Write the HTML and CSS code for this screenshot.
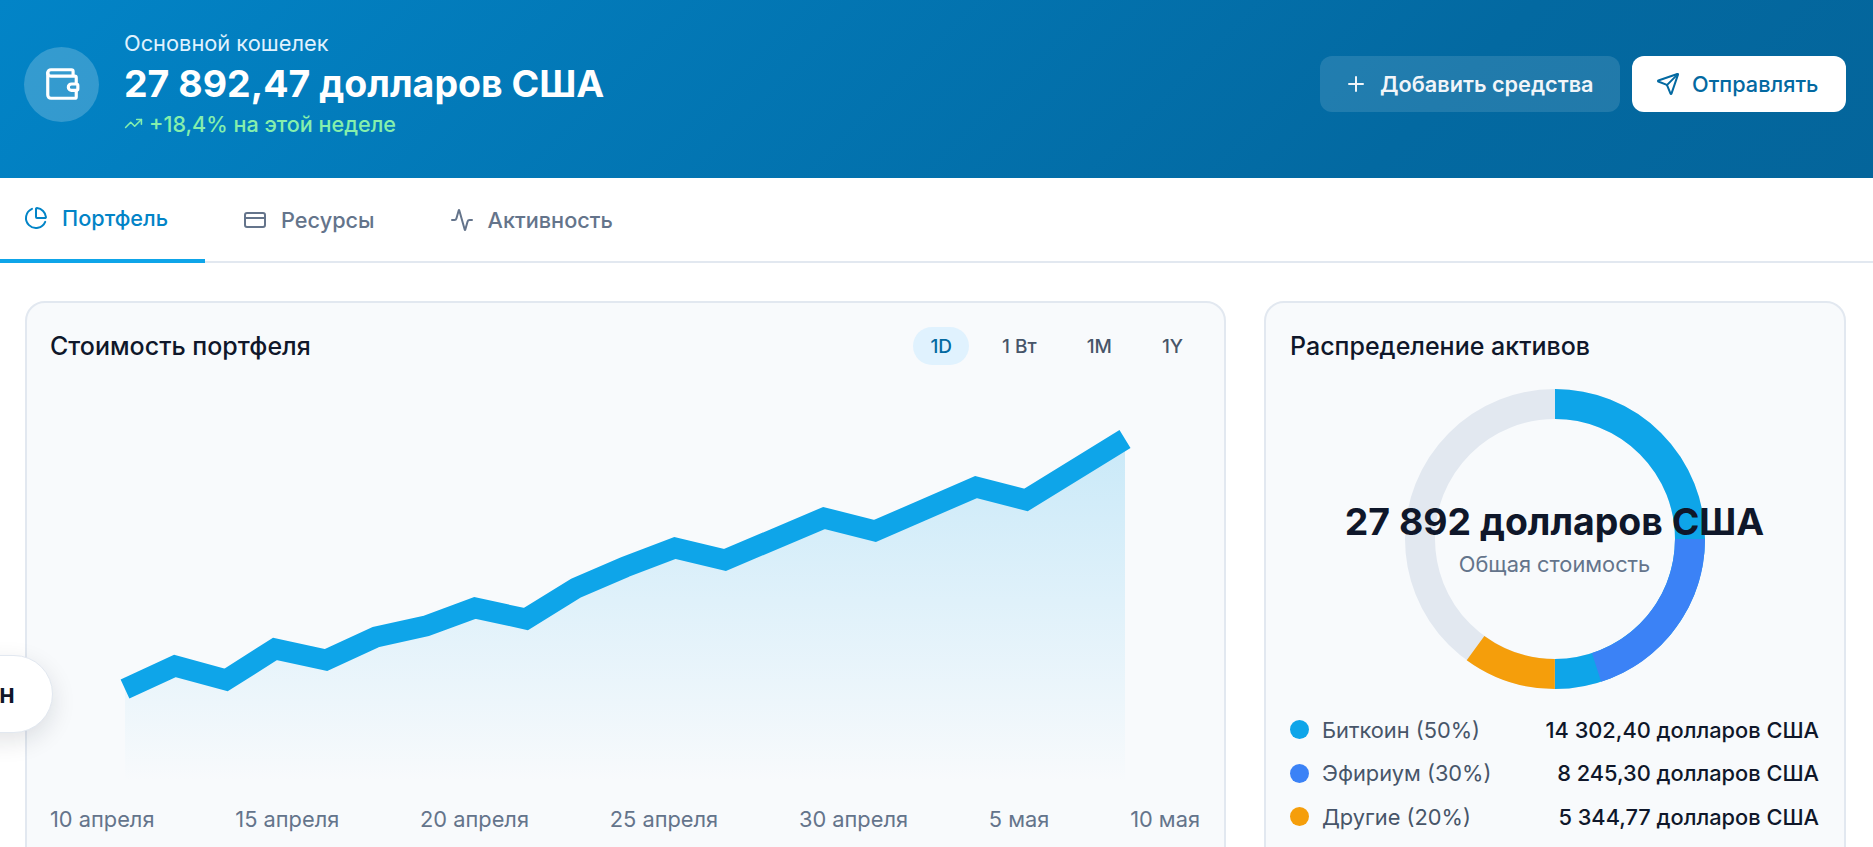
FILE: index.html
```html
<!DOCTYPE html>
<html lang="ru">

<head>
  <meta charset="UTF-8">
  <title>Основной кошелек</title>
  <link rel="stylesheet" href="styles.css">
</head>

<body>
  <header class="wallet-head">
    <div class="wallet-info">
      <div class="wallet-badge">
        <svg class="icon" width="38" height="38" viewBox="0 0 24 24">
          <path d="M19 7V4a1 1 0 0 0-1-1H5a2 2 0 0 0 0 4h15a1 1 0 0 1 1 1v4h-3a2 2 0 0 0 0 4h3a1 1 0 0 0 1-1v-2a1 1 0 0 0-1-1" />
          <path d="M3 5v14a2 2 0 0 0 2 2h15a1 1 0 0 0 1-1v-4" />
        </svg>
      </div>
      <div class="wallet-text">
        <div class="wallet-label">Основной кошелек</div>
        <div class="wallet-total">27 892,47 долларов США</div>
        <div class="wallet-trend">
          <svg class="icon" width="19" height="19" viewBox="0 0 24 24">
            <path d="M22 7 13.5 15.5 8.5 10.5 2 17" />
            <path d="M16 7h6v6" />
          </svg>
          <span>+18,4% на этой неделе</span>
        </div>
      </div>
    </div>
    <div class="wallet-actions">
      <button class="btn btn-add">
        <svg class="icon" width="24" height="24" viewBox="0 0 24 24">
          <path d="M5 12h14" />
          <path d="M12 5v14" />
        </svg>
        Добавить средства
      </button>
      <button class="btn btn-send">
        <svg class="icon" width="24" height="24" viewBox="0 0 24 24">
          <path d="M14.536 21.686a.5.5 0 0 0 .937-.024l6.5-19a.496.496 0 0 0-.635-.635l-19 6.5a.5.5 0 0 0-.024.937l7.93 3.18a2 2 0 0 1 1.112 1.11z" />
          <path d="m21.854 2.147-10.94 10.939" />
        </svg>
        Отправлять
      </button>
    </div>
  </header>

  <nav class="tabs">
    <a class="tab active">
      <svg class="icon" width="24" height="24" viewBox="0 0 24 24">
        <path d="M21 12c.552 0 1.005-.449.95-.998a10 10 0 0 0-8.953-8.951c-.55-.055-.998.398-.998.95v8a1 1 0 0 0 1 1z" />
        <path d="M21.21 15.89A10 10 0 1 1 8 2.83" />
      </svg>
      Портфель
    </a>
    <a class="tab">
      <svg class="icon" width="24" height="24" viewBox="0 0 24 24">
        <rect x="2" y="5" width="20" height="14" rx="2" />
        <path d="M2 10h20" />
      </svg>
      Ресурсы
    </a>
    <a class="tab">
      <svg class="icon" width="24" height="24" viewBox="0 0 24 24">
        <path d="M22 12h-2.48a2 2 0 0 0-1.93 1.46l-2.35 8.36a.25.25 0 0 1-.48 0L9.24 2.18a.25.25 0 0 0-.48 0l-2.35 8.36A2 2 0 0 1 4.49 12H2" />
      </svg>
      Активность
    </a>
  </nav>

  <main class="content">
    <section class="card chart-card">
      <div class="card-top">
        <h2 class="card-title">Стоимость портфеля</h2>
        <div class="periods">
          <span class="period active">1D</span>
          <span class="period">1 Вт</span>
          <span class="period">1M</span>
          <span class="period">1Y</span>
        </div>
      </div>
      <svg class="chart" width="1149" height="413" viewBox="0 0 1149 413">
        <defs>
          <linearGradient id="areaFill" x1="0" y1="0" x2="0" y2="1">
            <stop offset="0" stop-color="#0ea5e9" stop-opacity="0.2" />
            <stop offset="1" stop-color="#0ea5e9" stop-opacity="0" />
          </linearGradient>
        </defs>
        <polygon fill="url(#areaFill)" points="75,296 125,273 176,287 225,256 276,267 326,244 376,233 425,215 476,226 526,195 575,174 625,155 675,167 774,125 825,138 926,94 976,107 1075,46 1075,390 75,390" />
        <polyline class="chart-line" points="75,296 125,273 176,287 225,256 276,267 326,244 376,233 425,215 476,226 526,195 575,174 625,155 675,167 774,125 825,138 926,94 976,107 1075,46" />
      </svg>
      <div class="axis">
        <span>10 апреля</span>
        <span>15 апреля</span>
        <span>20 апреля</span>
        <span>25 апреля</span>
        <span>30 апреля</span>
        <span>5 мая</span>
        <span>10 мая</span>
      </div>
    </section>

    <section class="card alloc-card">
      <h2 class="card-title">Распределение активов</h2>
      <div class="donut">
        <svg class="donut-svg" width="300" height="300" viewBox="0 0 300 300">
          <circle class="ring ring-base" cx="150" cy="150" r="135" />
          <circle class="ring ring-btc" cx="150" cy="150" r="135" stroke-dasharray="424.1 848.2" />
          <circle class="ring ring-eth" cx="150" cy="150" r="135" stroke-dasharray="169.6 848.2" stroke-dashoffset="-212.06" />
          <circle class="ring ring-other" cx="150" cy="150" r="135" stroke-dasharray="84.8 848.2" stroke-dashoffset="-424.1" />
        </svg>
        <div class="donut-center">
          <div class="donut-total">27 892 долларов США</div>
          <div class="donut-label">Общая стоимость</div>
        </div>
      </div>
      <ul class="legend">
        <li class="legend-row">
          <span class="dot dot-btc"></span>
          <span class="legend-name">Биткоин (50%)</span>
          <span class="legend-value">14 302,40 долларов США</span>
        </li>
        <li class="legend-row">
          <span class="dot dot-eth"></span>
          <span class="legend-name">Эфириум (30%)</span>
          <span class="legend-value">8 245,30 долларов США</span>
        </li>
        <li class="legend-row">
          <span class="dot dot-other"></span>
          <span class="legend-name">Другие (20%)</span>
          <span class="legend-value">5 344,77 долларов США</span>
        </li>
      </ul>
    </section>
  </main>

  <div class="float-pill"><span>н</span></div>
</body>

</html>
```

FILE: styles.css
```css
* {
  box-sizing: border-box;
}

html,
body {
  height: 847px;
  overflow: hidden;
}

body {
  margin: 0;
  background-color: #fff;
  color: #0f172a;
  font-family: Inter, "Noto Sans", sans-serif;
}

.icon {
  flex: none;
  fill: none;
  stroke: currentColor;
  stroke-width: 2;
  stroke-linecap: round;
  stroke-linejoin: round;
}

/* header */
.wallet-head {
  display: flex;
  justify-content: space-between;
  align-items: center;
  height: 178px;
  padding: 30px 27px 40px 24px;
  background: linear-gradient(135deg, #0284c7, #0369a1 75%, #04659b);
  color: #fff;
}

.wallet-info {
  display: flex;
  align-items: center;
  gap: 25px;
}

.wallet-badge {
  display: flex;
  align-items: center;
  justify-content: center;
  width: 75px;
  height: 75px;
  border-radius: 50%;
  background-color: rgba(255, 255, 255, 0.2);
}

.wallet-text {
  padding-bottom: 2px;
}

.wallet-label {
  font-size: 21.8px;
  line-height: 26px;
  color: #e0f2fe;
}

.wallet-total {
  margin-top: 4px;
  font-size: 37.5px;
  line-height: 48px;
  font-weight: 700;
}

.wallet-trend {
  display: flex;
  align-items: center;
  gap: 6px;
  margin-top: 3px;
  font-size: 21.6px;
  line-height: 26px;
  font-weight: 500;
  color: #86efac;
}

.wallet-actions {
  display: flex;
  gap: 12px;
}

.btn {
  display: flex;
  align-items: center;
  gap: 12px;
  height: 56px;
  padding: 0 24px;
  border: 0;
  border-radius: 12px;
  font-family: inherit;
  font-size: 21.7px;
  font-weight: 600;
  white-space: nowrap;
}

.btn-add {
  width: 300px;
  background-color: rgba(255, 255, 255, 0.12);
  color: #f1f5f9;
}

.btn-send {
  width: 214px;
  background-color: #fff;
  color: #0369a1;
  font-weight: 500;
}

/* tabs */
.tabs {
  display: flex;
  height: 85px;
  border-bottom: 2px solid #e2e8f0;
}

.tab {
  display: flex;
  align-items: center;
  gap: 14px;
  padding: 0 37px 0 38px;
  font-size: 21.7px;
  font-weight: 500;
  color: #64748b;
}

.tab.active {
  padding: 0 37px 2px 24px;
  margin-bottom: -2px;
  border-bottom: 4px solid #0ea5e9;
  color: #0284c7;
}

/* cards */
.content {
  display: grid;
  grid-template-columns: 1201px 582px;
  gap: 38px;
  padding: 38px 27px 0 25px;
}

.card {
  height: 640px;
  padding: 24px 25px 24px 24px;
  border: 2px solid #e2e8f0;
  border-radius: 20px;
  background-color: #f8fafc;
}

.chart-card {
  padding: 24px 24px 24px 23px;
}

.card-top {
  display: flex;
  justify-content: space-between;
  align-items: center;
}

.card-title {
  margin: 0;
  font-size: 25px;
  line-height: 38px;
  font-weight: 500;
  color: #0f172a;
}

.periods {
  display: flex;
  gap: 16px;
}

.period {
  display: flex;
  align-items: center;
  height: 38px;
  padding: 0 17px;
  border-radius: 19px;
  font-size: 19px;
  font-weight: 500;
  color: #475569;
}

.period.active {
  background-color: #e0f2fe;
  color: #0369a1;
}

.chart {
  display: block;
  margin-top: 28px;
}

.chart-line {
  fill: none;
  stroke: #0ea5e9;
  stroke-width: 21;
}

.axis {
  display: flex;
  justify-content: space-between;
  font-size: 21.8px;
  line-height: 26px;
  color: #64748b;
}

/* allocation */
.donut {
  position: relative;
  width: 300px;
  height: 300px;
  margin: 24px auto 0;
}

.donut-svg {
  display: block;
  transform: rotate(-90deg);
}

.ring {
  fill: none;
  stroke-width: 30;
}

.ring-base {
  stroke: #e2e8f0;
}

.ring-btc {
  stroke: #0ea5e9;
}

.ring-eth {
  stroke: #3b82f6;
}

.ring-other {
  stroke: #f59e0b;
}

.donut-center {
  position: absolute;
  top: 111px;
  left: -70px;
  width: 440px;
  text-align: center;
}

.donut-total {
  font-size: 37.4px;
  line-height: 44px;
  font-weight: 700;
}

.donut-label {
  margin-top: 7px;
  font-size: 21.8px;
  line-height: 26px;
  color: #64748b;
}

.legend {
  margin: 19px 0 0;
  padding: 0;
  list-style: none;
}

.legend-row {
  display: flex;
  align-items: center;
  height: 43.5px;
  font-size: 21.8px;
}

.dot {
  width: 19px;
  height: 19px;
  margin-right: 13px;
  border-radius: 50%;
}

.dot-btc {
  background-color: #0ea5e9;
}

.dot-eth {
  background-color: #3b82f6;
}

.dot-other {
  background-color: #f59e0b;
}

.legend-name {
  color: #475569;
}

.legend-value {
  margin-left: auto;
  font-weight: 500;
}

/* floating pill cut by the window edge */
.float-pill {
  position: absolute;
  top: 655px;
  left: -60px;
  display: flex;
  align-items: center;
  justify-content: flex-end;
  width: 113px;
  height: 78px;
  padding: 0 37px 2px 0;
  border: 1px solid #e2e8f0;
  border-radius: 39px;
  background-color: #fff;
  box-shadow: 0 8px 24px rgba(15, 23, 42, 0.12);
  font-size: 26px;
  font-weight: 600;
  color: #0f172a;
}
```
